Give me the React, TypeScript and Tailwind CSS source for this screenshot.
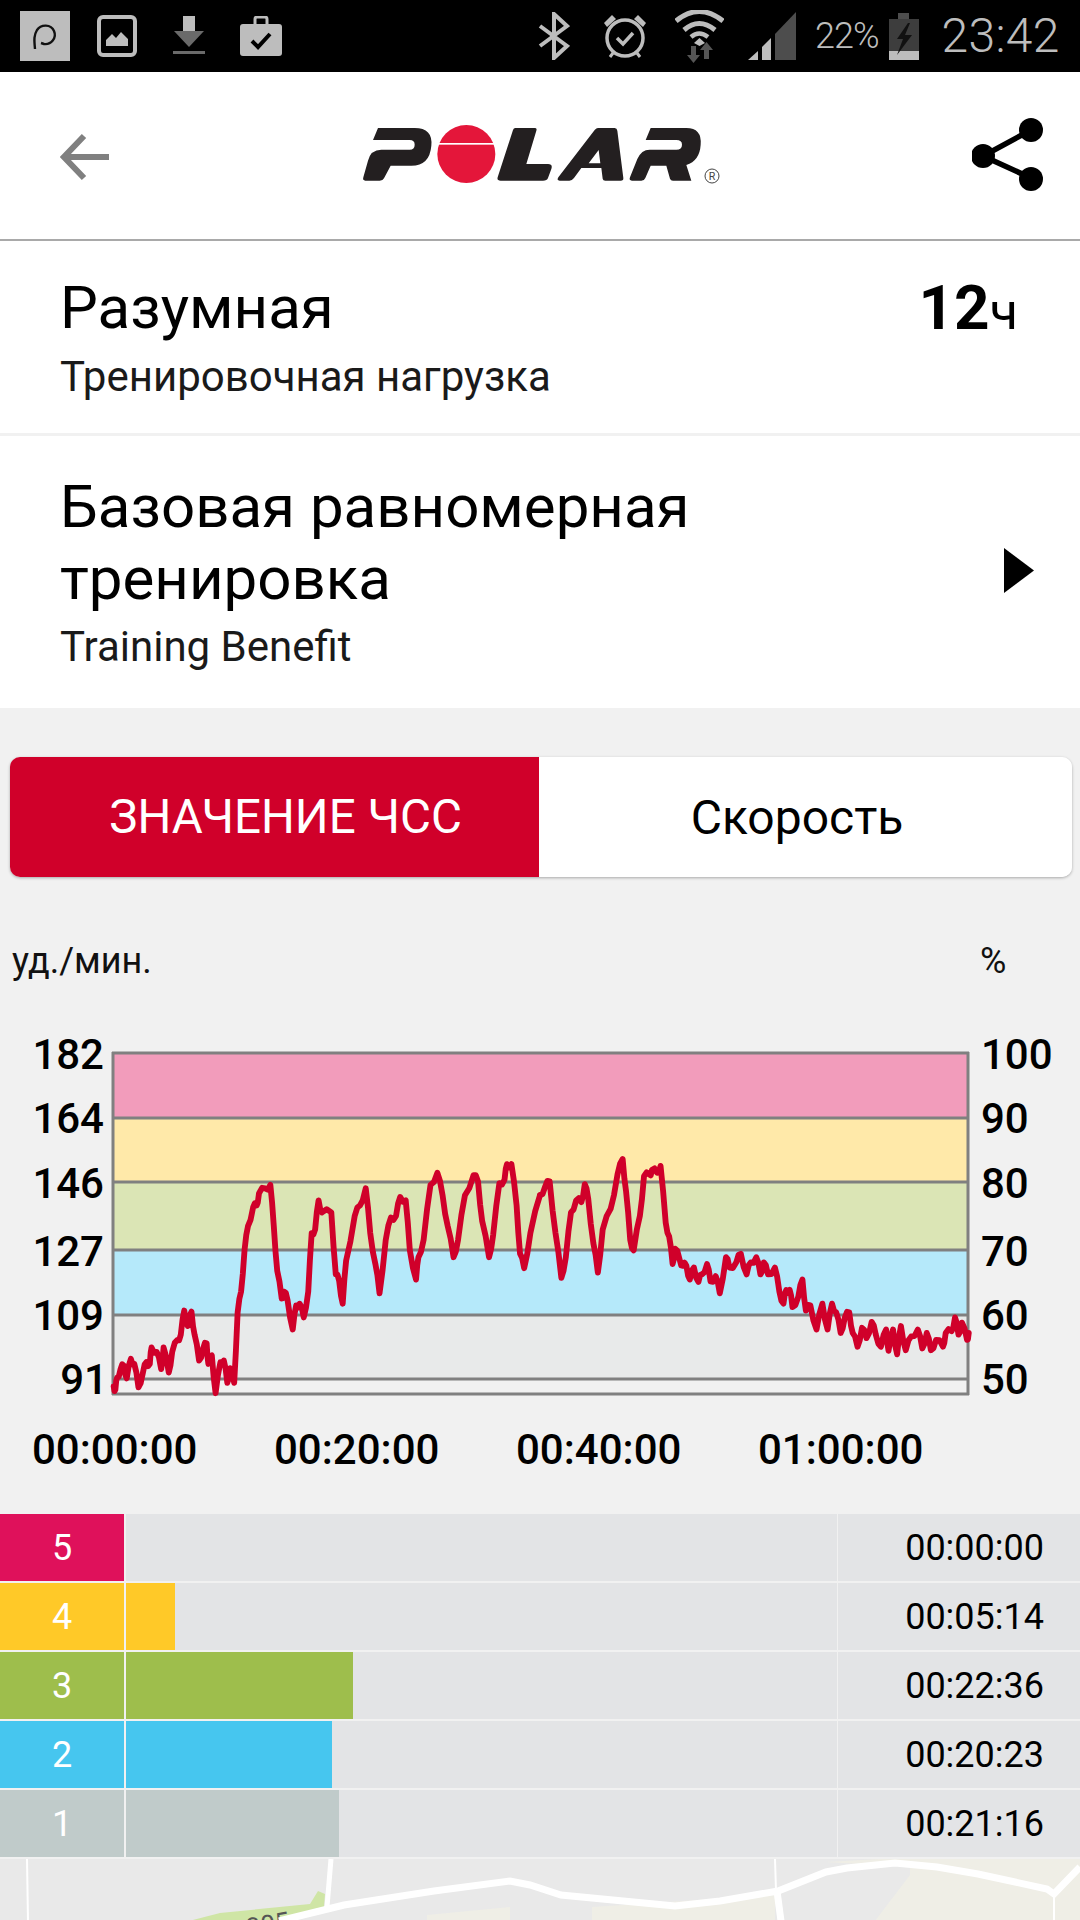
import React from 'react';

const FONT = "font-['Roboto',sans-serif]";

// heart rate trace, read off the chart in two halves
const traceLeft =
  '330,1325 335,1335 340,1300 350,1275 360,1265 368,1302 380,1245 390,1260 402,1328 415,1285 425,1255 435,1260 440,1212 455,1225 468,1275 475,1212 490,1285 500,1225 515,1190 525,1175 535,1105 545,1150 556,1108 565,1175 578,1250 590,1215 600,1200 605,1260 615,1235 626,1345 640,1255 650,1250 660,1315 668,1272 680,1315 690,1110 700,1050 710,930 720,860 735,805 745,800 752,765 770,750 785,740 795,860 805,990 818,1070 825,1050 835,1075 850,1160 860,1090 870,1085 882,1125 895,1050 905,880 915,870 925,785 935,820 962,820 975,1000 985,1020 995,1085 1005,960 1030,830 1045,800 1062,750 1075,880 1090,970 1102,1055 1120,900 1135,835 1150,830 1162,775 1178,785 1190,930 1208,1015 1215,950 1230,900 1250,740 1270,705 1285,770 1300,860 1317,950 1330,900 1350,770 1375,712 1388,730 1400,845 1420,950 1432,885 1450,735 1465,725 1472,680 1485,680 1500,800 1510,940 1522,982 1540,880 1568,770';
const traceRight =
  '0,770 15,745 28,730 45,880 62,1010 75,950 90,820 105,785 120,790 130,738 140,780 155,910 168,995 182,870 205,810 225,710 240,665 250,760 262,900 272,930 290,830 302,715 318,710 325,697 340,705 350,685 365,850 375,890 385,970 392,925 405,955 415,975 425,975 435,1015 447,980 460,1022 470,1000 485,970 495,1020 510,1005 522,1055 540,950 550,980 570,965 583,940 600,1000 612,965 628,950 640,1000 650,965 662,1000 682,980 695,1050 707,1085 715,1045 725,1045 733,1095 750,1065 762,1015 772,1105 785,1090 803,1160 820,1085 835,1160 848,1085 860,1110 873,1170 885,1125 898,1110 908,1170 922,1210 935,1155 948,1185 963,1138 975,1175 990,1210 1005,1160 1012,1222 1025,1160 1037,1232 1048,1150 1062,1220 1078,1180 1097,1160 1110,1215 1123,1170 1135,1220 1150,1190 1170,1210 1178,1170 1195,1165 1205,1125 1215,1175 1225,1140 1240,1190 1245,1170';

// the sensor line is noisy, so add a small wobble between the read-off points
function roughen(points: string) {
  const pts = points.split(' ').map((p) => p.split(',').map(Number));
  const out: string[] = [];
  pts.forEach((p, i) => {
    out.push(`${p[0]},${p[1]}`);
    const next = pts[i + 1];
    if (next) {
      const wobble = i % 2 === 0 ? 9 : -9;
      out.push(`${(p[0] + next[0]) / 2},${(p[1] + next[1]) / 2 + wobble}`);
    }
  });
  return out.join(' ');
}

const bands = [
  { y: 1053, h: 65, fill: '#F29CBB' },
  { y: 1118, h: 64, fill: '#FFE9A9' },
  { y: 1182, h: 68, fill: '#DBE5B5' },
  { y: 1250, h: 65, fill: '#B5E9FA' },
  { y: 1315, h: 64, fill: '#E8EAEA' },
];

const gridLines = [1053, 1118, 1182, 1250, 1315, 1379, 1394];

const yLabels = [
  { bpm: '182', pct: '100', y: 1069, x: 104 },
  { bpm: '164', pct: '90', y: 1133, x: 104 },
  { bpm: '146', pct: '80', y: 1198, x: 104 },
  { bpm: '127', pct: '70', y: 1266, x: 104 },
  { bpm: '109', pct: '60', y: 1330, x: 104 },
  { bpm: '91', pct: '50', y: 1394, x: 108 },
];

const zones = [
  { n: 5, color: '#DF115B', bar: 0, time: '00:00:00' },
  { n: 4, color: '#FFC928', bar: 49, time: '00:05:14' },
  { n: 3, color: '#9EBE4C', bar: 227, time: '00:22:36' },
  { n: 2, color: '#46C6EF', bar: 206, time: '00:20:23' },
  { n: 1, color: '#C0CBCA', bar: 213, time: '00:21:16' },
];

function StatusBar() {
  return (
    <div className="flex h-[72px] items-center bg-black pl-[20px] text-[#BDBDBD]">
      <svg width="50" height="50" viewBox="0 0 50 50">
        <rect width="50" height="50" fill="#BDBDBD" />
        <path d="M15 38 C14 28 14 24 17 19 C21 13 31 13 34 20 C37 27 31 34 24 33 L21 32" fill="none" stroke="#111" strokeWidth="2.4" />
      </svg>
      <svg width="40" height="42" viewBox="0 0 40 42" className="ml-[27px]">
        <rect x="2" y="2" width="36" height="38" rx="4" fill="none" stroke="#BDBDBD" strokeWidth="4" />
        <rect x="6" y="6" width="28" height="30" fill="#000" />
        <path d="M9 31 L9 25 L15 19 L19 23 L24 17 L31 24 L31 31 Z" fill="#BDBDBD" />
      </svg>
      <svg width="32" height="40" viewBox="0 0 32 40" className="ml-[36px]">
        <rect x="10" y="0" width="12" height="16" fill="#BDBDBD" />
        <path d="M1 15 H31 L16 31 Z" fill="#6A6A6A" />
        <rect x="0" y="35" width="32" height="3" fill="#6A6A6A" />
      </svg>
      <svg width="42" height="40" viewBox="0 0 42 40" className="ml-[35px]">
        <path d="M15 9 V3 Q15 1 17 1 H25 Q27 1 27 3 V9" fill="none" stroke="#BDBDBD" strokeWidth="3" />
        <rect x="0" y="8" width="42" height="32" rx="3" fill="#BDBDBD" />
        <path d="M12 25 L18 31 L30 18" fill="none" stroke="#000" strokeWidth="4" />
      </svg>
      <svg width="33" height="48" viewBox="0 0 33 48" className="ml-[255px]">
        <path d="M3 14 L30 34 L17 46 V2 L30 14 L3 34" fill="none" stroke="#BDBDBD" strokeWidth="4" />
      </svg>
      <svg width="44" height="47" viewBox="0 0 44 47" className="ml-[33px]">
        <circle cx="22" cy="25" r="18" fill="none" stroke="#BDBDBD" strokeWidth="3.5" />
        <path d="M1 10 L9 2 L13 6 L4 14 Z M43 10 L35 2 L31 6 L40 14 Z" fill="#BDBDBD" />
        <path d="M7 44 L10 40 M37 44 L34 40" stroke="#BDBDBD" strokeWidth="3" />
        <path d="M14 25 L20 31 L30 20" fill="none" stroke="#BDBDBD" strokeWidth="3.5" />
      </svg>
      <svg width="49" height="53" viewBox="0 0 49 53" className="ml-[28px]">
        <path d="M1 11 Q24 -8 48 11" fill="none" stroke="#BDBDBD" strokeWidth="5" />
        <path d="M9 20 Q24 7 40 20" fill="none" stroke="#BDBDBD" strokeWidth="5" />
        <path d="M16 27 Q24 20 33 27" fill="none" stroke="#BDBDBD" strokeWidth="4.5" />
        <path d="M24.5 28 L30 33 L24.5 36 L19 33 Z" fill="#BDBDBD" />
        <path d="M16 36 H21 V45 H25 L18.500 53 L12 45 H16 Z" fill="#555" />
        <path d="M29 49 V40 H25 L31.500 32 L38 40 H34 V49 Z" fill="#555" />
      </svg>
      <svg width="48" height="48" viewBox="0 0 48 48" className="ml-[24px]">
        <path d="M0 48 L10 39 V48 Z" fill="#BDBDBD" />
        <path d="M14 48 V35 L23 26 V48 Z" fill="#BDBDBD" />
        <path d="M27 48 V22 L48 0 V48 Z" fill="#4D4D4D" />
      </svg>
      <span className={`${FONT} ml-[19px] text-[36px] font-light leading-none tracking-[-1px]`}>22%</span>
      <svg width="30" height="47" viewBox="0 0 30 47" className="ml-[10px]">
        <rect x="9" y="0" width="11" height="6" fill="#4D4D4D" />
        <rect x="0" y="6" width="30" height="32" fill="#3D3D3D" />
        <rect x="0" y="38" width="30" height="9" fill="#BDBDBD" />
        <path d="M19 10 L8 26 H14 L8 42 L23 22 H16 L21 10 Z" fill="#111" />
      </svg>
      <span className={`${FONT} ml-[23px] text-[48px] font-light leading-none tracking-[0.3px]`}>23:42</span>
    </div>
  );
}

function PolarLogo() {
  return (
    <svg width="380" height="80" viewBox="0 0 1140 240">
      <path
        d="M90 42 H200 Q255 42 250 95 Q245 155 190 155 H128 L108 193 Q105 200 95 200 H52 Q43 200 46 190 L60 140 Q68 107 100 107 H185 Q200 107 200 92 Q200 78 185 78 H75 Z"
        fill="#231F20"
      />
      <circle cx="355" cy="120" r="87" fill="#E4163A" />
      <rect x="262" y="87" width="190" height="5" fill="#fff" />
      <path
        d="M502 42 H560 Q568 42 565 50 L535 150 H600 Q615 150 610 165 L600 192 Q597 200 585 200 H458 Q446 200 449 190 L495 48 Q497 42 502 42 Z"
        fill="#231F20"
      />
      <path
        fillRule="evenodd"
        d="M750 42 H800 Q807 42 808 50 L826 192 Q827 200 818 200 H772 Q765 200 764 194 L760 162 H700 L678 192 Q672 200 664 200 H635 Q625 200 631 190 L740 48 Q745 42 750 42 Z M752 108 L722 148 H757 Z"
        fill="#231F20"
      />
      <path
        d="M908 42 H1015 Q1062 42 1058 92 Q1055 140 1015 153 L1030 200 H975 Q968 200 966 194 L955 155 H908 L892 192 Q889 200 880 200 H852 Q842 200 846 190 L868 135 Q880 107 905 107 H985 Q1002 107 1002 92 Q1002 78 985 78 H893 Z"
        fill="#231F20"
      />
      <circle cx="1092" cy="186" r="21" fill="none" stroke="#444" strokeWidth="3" />
      <text x="1092" y="198" textAnchor="middle" fontSize="32" fill="#444" fontFamily="Roboto, sans-serif">
        R
      </text>
    </svg>
  );
}

function Header() {
  return (
    <div className="relative flex h-[169px] items-center justify-between border-b-2 border-[#A9A9A9] bg-white pl-[60px] pr-[36px]">
      <svg width="50" height="48" viewBox="0 0 50 48" className="mt-[2px]">
        <path d="M24 3 L4 24 L24 45 M4 24 H49" fill="none" stroke="#808080" strokeWidth="6" />
      </svg>
      <div className="absolute left-[348px] top-[42px]">
        <PolarLogo />
      </div>
      <svg width="72" height="74" viewBox="0 0 72 74" className="mt-[-2px]">
        <path d="M59 12 L11 38 L59 60" fill="none" stroke="#000" strokeWidth="5.500" />
        <circle cx="59" cy="12" r="12" fill="#000" />
        <circle cx="11" cy="38" r="12" fill="#000" />
        <circle cx="59" cy="61" r="12" fill="#000" />
      </svg>
    </div>
  );
}

function Summary() {
  return (
    <div className={`${FONT} text-black`}>
      <div className="flex h-[192px] items-start justify-between bg-white pl-[60px] pr-[62px] pt-[32px]">
        <div>
          <div className="text-[60px] leading-[70px]">Разумная</div>
          <div className="mt-[11px] text-[42px] leading-[46px] text-[#1a1a1a]">Тренировочная нагрузка</div>
        </div>
        <div className="text-[62px] leading-[70px]">
          <span className="font-bold">12</span>
          <span className="text-[52px]">ч</span>
        </div>
      </div>
      <div className="h-[3px] bg-[#F1F1F1]" />
      <div className="flex h-[272px] items-center justify-between bg-white pl-[60px] pr-[46px]">
        <div className="mt-[-3px]">
          <div className="text-[60px] leading-[72px]">
            Базовая равномерная
            <br />
            тренировка
          </div>
          <div className="mt-[9px] text-[42px] leading-[46px] text-[#1a1a1a]">Training Benefit</div>
        </div>
        <svg width="30" height="45" viewBox="0 0 30 45" className="mt-[-3px]">
          <path d="M0 0 L30 22.500 L0 45 Z" fill="#000" />
        </svg>
      </div>
    </div>
  );
}

function Toggle() {
  return (
    <div className={`${FONT} ml-[10px] mr-[8px] mt-[49px] flex h-[120px] overflow-hidden rounded-[10px] text-[48px] shadow-[0_1px_3px_rgba(0,0,0,0.3)]`}>
      <div className="flex w-[529px] items-center justify-center bg-[#D0002A] pl-[22px] pt-[2px] text-[47.500px] text-white">ЗНАЧЕНИЕ ЧСС</div>
      <div className="flex flex-1 items-center justify-center bg-white pr-[17px] pt-[2px] text-black">Скорость</div>
    </div>
  );
}

function HeartRateChart() {
  return (
    <svg width="1080" height="600" viewBox="0 913 1080 600" className="block" fontFamily="Roboto, sans-serif">
      <text x="12" y="973" fontSize="36" fill="#111">уд./мин.</text>
      <text x="980" y="973" fontSize="36" fill="#111">%</text>

      {bands.map((b) => (
        <rect key={b.y} x="113" y={b.y} width="855" height={b.h} fill={b.fill} />
      ))}
      {gridLines.map((y) => (
        <line key={y} x1="112" x2="969" y1={y} y2={y} stroke="#808080" strokeWidth="3" />
      ))}
      <line x1="113" x2="113" y1="1052" y2="1395" stroke="#808080" strokeWidth="3" />
      <line x1="968" x2="968" y1="1052" y2="1395" stroke="#808080" strokeWidth="3" />

      {yLabels.map((l) => (
        <g key={l.bpm} fontSize="42" fontWeight="500" fill="#000">
          <text x={l.x} y={l.y} textAnchor="end">{l.bpm}</text>
          <text x="981" y={l.y}>{l.pct}</text>
        </g>
      ))}

      <g fill="none" stroke="#D0002A" strokeWidth="17" strokeLinejoin="round" strokeLinecap="round">
        <polyline points={roughen(traceLeft)} transform="translate(0 930) scale(0.3444)" />
        <polyline points={roughen(traceRight)} transform="translate(540 930) scale(0.3444)" />
      </g>

      {['00:00:00', '00:20:00', '00:40:00', '01:00:00'].map((t, i) => (
        <text key={t} x={32 + i * 242} y="1464" fontSize="42" fontWeight="500" fill="#000">{t}</text>
      ))}
    </svg>
  );
}

function ZoneBars() {
  return (
    <div className={`${FONT} border-t border-[#F1F1F1]`}>
      {zones.map((z) => (
        <div key={z.n} className="flex h-[69px] border-b-2 border-[#F1F1F1] bg-[#E3E4E6]">
          <div className="flex w-[124px] items-center justify-center text-[36px] text-white" style={{ background: z.color }}>
            {z.n}
          </div>
          <div className="w-[2px] bg-[#F1F1F1]" />
          <div className="h-full" style={{ width: z.bar, background: z.color }} />
          <div className="flex-1" />
          <div className="flex h-full w-[243px] items-center justify-end border-l border-[#F1F1F1] pr-[36px] text-[36px] text-black">
            {z.time}
          </div>
        </div>
      ))}
    </div>
  );
}

function MapPreview() {
  return (
    <svg width="1080" height="62" viewBox="0 0 1080 62" className="block bg-[#E9E9E9]">
      <path d="M592 48 L775 36 V62 H592 Z M427 56 L510 48 V62 H427 Z M826 3 L880 0 H1080 V62 H875 L910 16 V8 Z" fill="#EFEEE6" />
      <path d="M189 62 L220 54 L310 45 L318 32 L325 35 L324 48 L279 62 Z" fill="#CFE5A5" />
      <text x="248" y="78" fontSize="26" fill="#555" fontFamily="Roboto, sans-serif" transform="rotate(-10 248 78)">305</text>
      <path d="M331 0 L327 48" stroke="#fff" strokeWidth="5" />
      <path d="M775 0 L776 32" stroke="#fff" strokeWidth="2" />
      <path d="M777 32 L781 62" stroke="#fff" strokeWidth="7" />
      <path d="M27 0 L28 62" stroke="#fff" strokeWidth="2" />
      <path d="M1054 35 V62" stroke="#fff" strokeWidth="2" />
      <polyline
        points="279,62 344,46 434,32 510,22 530,26 561,36 675,47 720,42 778,32 826,13 847,9 895,4 937,8 978,15 1047,30 1054,35 1080,8"
        fill="none"
        stroke="#fff"
        strokeWidth="7"
      />
    </svg>
  );
}

export default function App() {
  return (
    <div className="h-[1920px] w-[1080px] overflow-hidden bg-[#F1F1F1]">
      <StatusBar />
      <Header />
      <Summary />
      <Toggle />
      <div className="mt-[36px]">
        <HeartRateChart />
      </div>
      <ZoneBars />
      <MapPreview />
    </div>
  );
}
